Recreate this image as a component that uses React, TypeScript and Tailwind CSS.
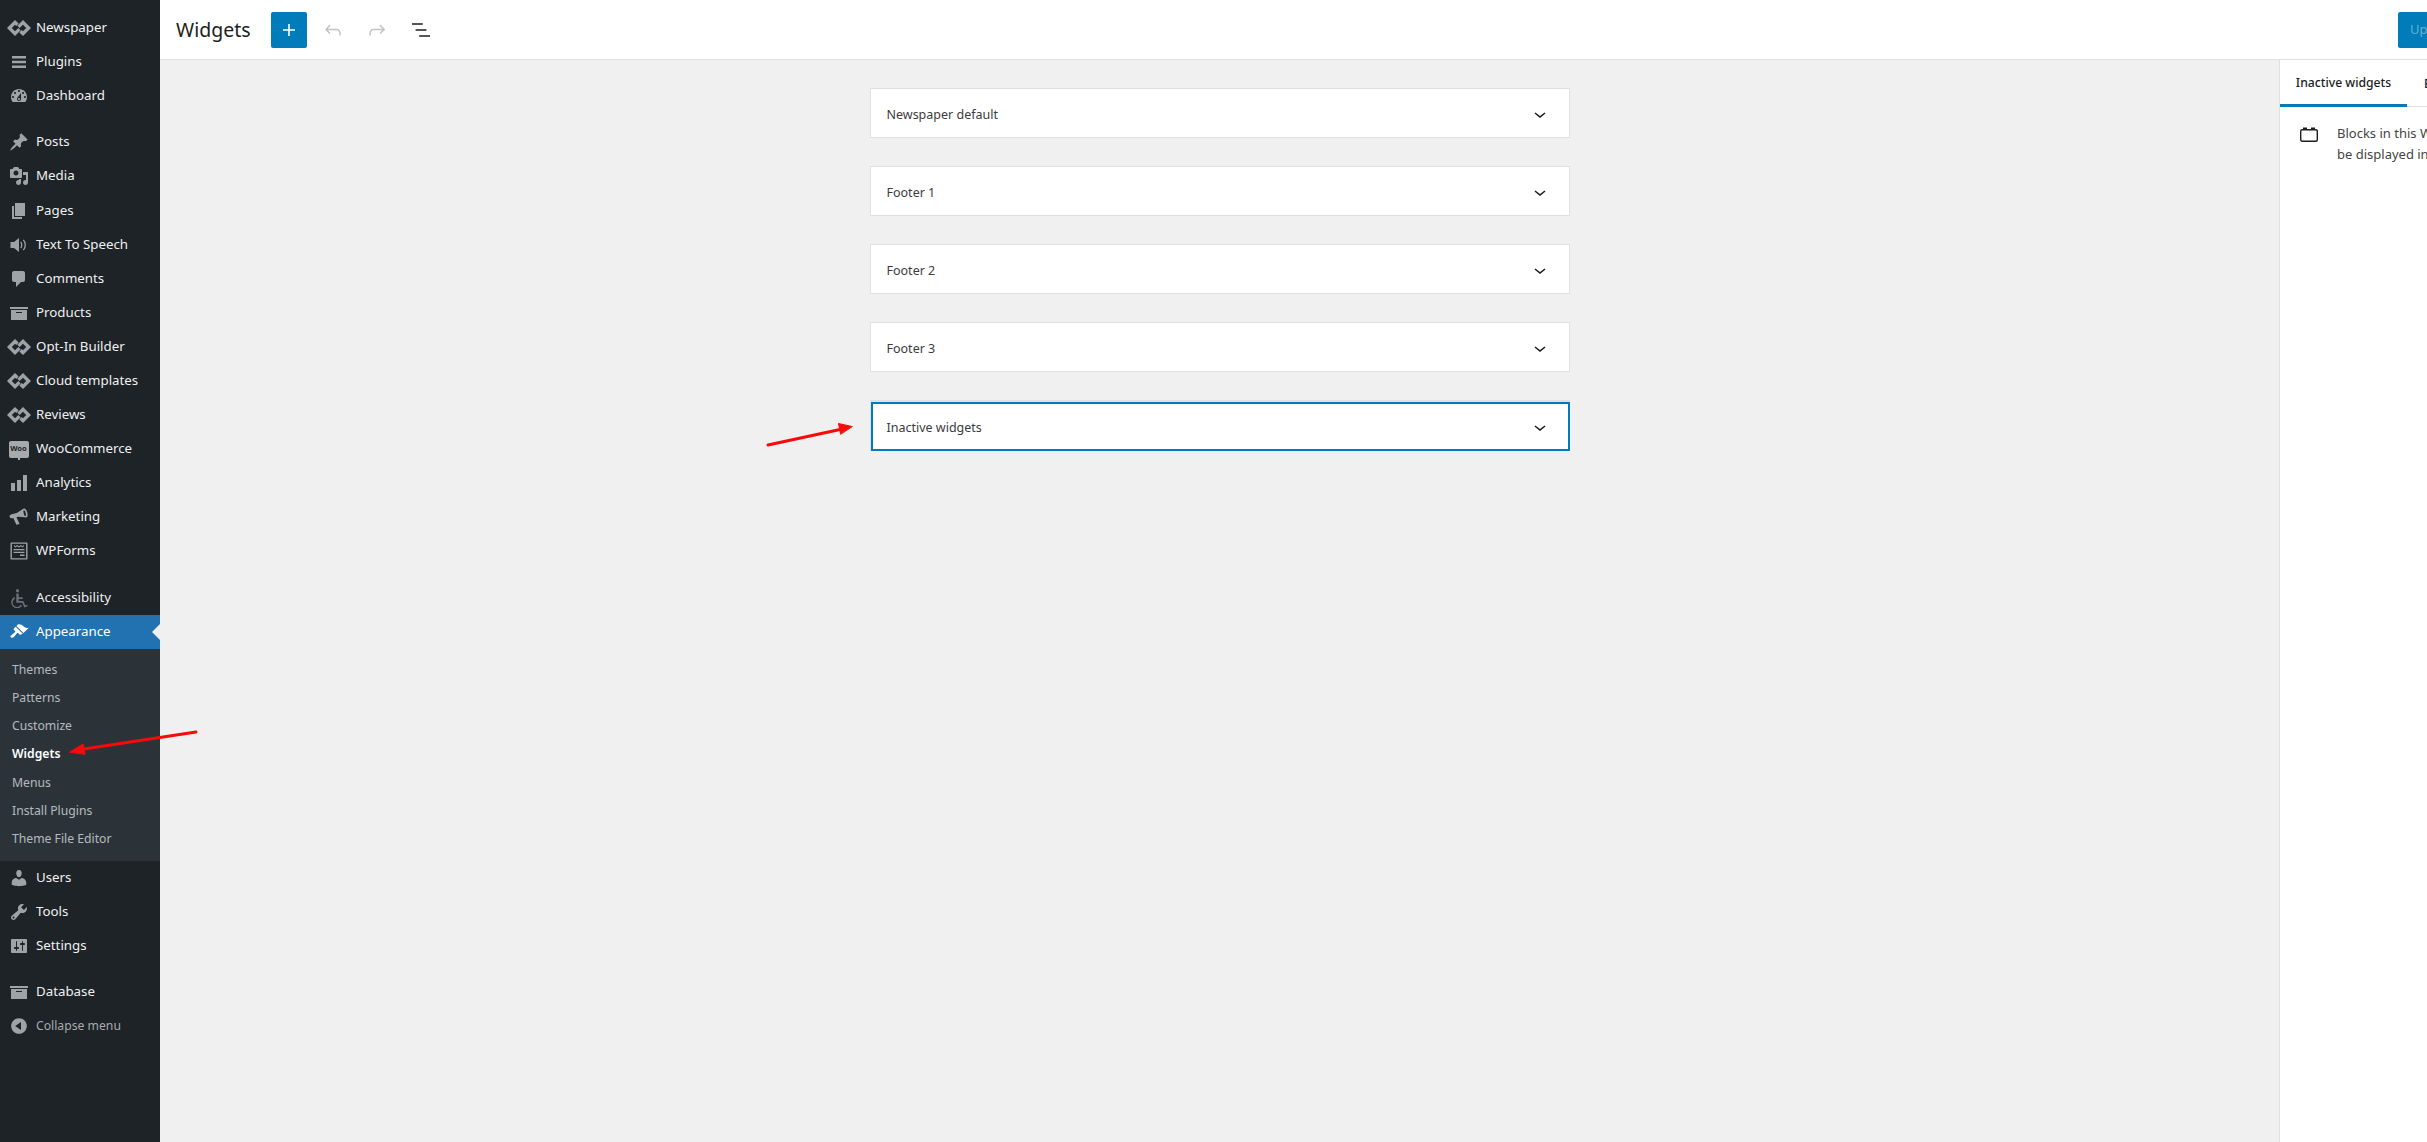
import React from "react";

const FONT = "font-['Noto_Sans','Open_Sans',sans-serif]";

// dashicon paths, 20x20 box
const DASH: Record<string, string> = {
  menu: "M3 4h14v2.400H3zM3 8.800h14v2.400H3zM3 13.600h14V16H3z",
  dashboard:
    "M3.760 16h12.480c1.100-1.370 1.760-3.110 1.760-5 0-4.420-3.580-8-8-8s-8 3.580-8 8c0 1.890.66 3.630 1.760 5zM10 4c.55 0 1 .45 1 1s-.45 1-1 1-1-.45-1-1 .45-1 1-1zM6 6c.55 0 1 .45 1 1s-.45 1-1 1-1-.45-1-1 .45-1 1-1zm8 0c.55 0 1 .45 1 1s-.45 1-1 1-1-.45-1-1 .45-1 1-1zm-5.370 5.550L12 7v6c0 1.100-.9 2-2 2s-2-.9-2-2c0-.57.24-1.080.63-1.450zM4 10c.55 0 1 .45 1 1s-.45 1-1 1-1-.45-1-1 .45-1 1-1zm12 0c.55 0 1 .45 1 1s-.45 1-1 1-1-.45-1-1 .45-1 1-1zm-5 3c0-.55-.45-1-1-1s-1 .45-1 1 .45 1 1 1 1-.45 1-1z",
  pin: "M10.440 3.020l1.820-1.820 6.360 6.350-1.830 1.820c-1.050-.68-2.480-.57-3.410.36l-.75.75c-.92.93-1.040 2.350-.35 3.410l-1.830 1.820-2.410-2.410-2.800 2.790c-.42.42-3.380 2.710-3.800 2.290s1.860-3.390 2.280-3.810l2.790-2.790L4.100 9.360l1.830-1.820c1.050.69 2.480.57 3.400-.36l.75-.75c.93-.92 1.050-2.350.36-3.410z",
  media:
    "M13 11V4c0-.55-.45-1-1-1h-1.670L9 1H5L3.670 3H2c-.55 0-1 .45-1 1v7c0 .55.45 1 1 1h10c.55 0 1-.45 1-1zM7 4.500c1.380 0 2.500 1.120 2.500 2.500S8.380 9.500 7 9.500 4.500 8.380 4.500 7 5.620 4.500 7 4.500zM14 6h5v10.500c0 1.380-1.120 2.500-2.500 2.500S14 17.880 14 16.500s1.120-2.500 2.500-2.500c.17 0 .34.02.5.05V9h-3V6zm-4 8.050V13h2v3.500c0 1.380-1.120 2.500-2.500 2.500S7 17.880 7 16.500 8.120 14 9.500 14c.17 0 .34.02.5.05z",
  page: "M6 15V2h10v13H6zm-1 1h8v2H3V5h2v11z",
  speaker:
    "M1.500 7H5l5-4v14l-5-4H1.500zM12 6.500c1.800 1 1.800 6 0 7l-.7-1c1-.8 1-4.200 0-5zM14.500 4.500c3.200 2 3.200 9 0 11l-.7-1c2.400-1.800 2.400-7.200 0-9z",
  comment:
    "M5 2h9c1.100 0 2 .9 2 2v7c0 1.100-.9 2-2 2h-2l-5 5v-5H5c-1.100 0-2-.9-2-2V4c0-1.100.9-2 2-2z",
  archive: "M19 4v2H1V4h18zM2 7h16v10H2V7zm11 3V9H7v1h6z",
  chart: "M18 18V2h-4v16h4zm-6 0V7H8v11h4zm-6 0v-8H2v8h4z",
  megaphone:
    "M18 3.500c.8 1 1.200 2.600 1.200 4.300s-.4 3.300-1.200 4.200c-.9.500-1.800.2-2.600-.4L9 9.500H7.500l1.300 7.300H5.500L4.200 9.500H3.500C2.100 9.500 1 8.700 1 7.500s1.100-2 2.500-2H9l6.400-2.200c.9-.4 1.800-.3 2.600.2zm-1.500 1.300c-.6 0-1 1.300-1 3s.4 3 1 3 1-1.300 1-3-.4-3-1-3z",
  wpforms:
    "M2.500 1.500h15c.6 0 1 .4 1 1v15c0 .6-.4 1-1 1h-15c-.6 0-1-.4-1-1v-15c0-.6.4-1 1-1zm.4 1.200v14.600h14.200V2.700zM4.500 8h11v1.300h-11zm0 2.800h11v1.300h-11zM11 13.600h4.500v1.400H11zM5 4l1.500 1.300L8 4l2 1.300L12 4l1.500 1.300L15 4v1.200l-1.500 1.300L12 5.300l-2 1.200-2-1.200-1.500 1.200L5 5.200z",
  access:
    "M8.500 1a1.700 1.700 0 1 1 0 3.400A1.700 1.700 0 0 1 8.500 1zM7.300 5.500h2.400v3.700h4v1.800h-4V13h4.600l2 4.500 1.700-.7.600 1.500-3.300 1.300-2-4.800H7.300zM5.700 8.800v2.100a4.300 4.300 0 1 0 6.200 5.300l1 1.800A6 6 0 1 1 5.700 8.800z",
  appearance:
    "M14.480 11.060L7.410 3.990l1.500-1.500c.5-.56 2.300-.47 3.510.32 1.210.8 1.430 1.280 2.910 2.100 1.180.64 2.450 1.260 4.450.85zm-.71.71L6.700 4.700 4.930 6.470c-.39.39-.39 1.020 0 1.410l1.060 1.060c.39.39.39 1.030 0 1.420-.6.6-1.430 1.110-2.210 1.690-.35.26-.7.53-1.010.84C1.430 13.230.99 14.300 2 15.310c1.010 1.010 2.080.57 3.400-.73.31-.31.58-.66.84-1.010.58-.78 1.090-1.610 1.690-2.210.39-.39 1.030-.39 1.420 0l1.060 1.060c.39.39 1.020.39 1.410 0z",
  users:
    "M10 9.250c-2.270 0-2.730-3.440-2.730-3.440C7 4.020 7.820 2 9.970 2c2.160 0 2.980 2.020 2.710 3.810 0 0-.41 3.440-2.680 3.440zm0 2.570L12.720 10c2.390 0 4.520 2.330 4.520 4.530v2.490s-3.650 1.130-7.240 1.130c-3.650 0-7.240-1.130-7.240-1.130v-2.490c0-2.250 1.940-4.480 4.470-4.480z",
  tools:
    "M16.680 9.770c-1.340 1.340-3.300 1.670-4.950.99l-5.410 6.520c-.99.99-2.590.99-3.580 0s-.99-2.590 0-3.570l6.520-5.420c-.68-1.650-.35-3.610.99-4.950 1.280-1.280 3.120-1.620 4.720-1.060l-2.890 2.890 2.820 2.820 2.860-2.870c.53 1.580.18 3.390-1.080 4.650zM3.810 16.210c.4.39 1.040.39 1.430 0 .4-.4.4-1.040 0-1.430-.39-.4-1.030-.4-1.430 0-.39.39-.39 1.030 0 1.430z",
  settings:
    "M18 16V4c0-.55-.45-1-1-1H3c-.55 0-1 .45-1 1v12c0 .55.45 1 1 1h14c.55 0 1-.45 1-1zM8 11h1c.55 0 1 .45 1 1s-.45 1-1 1H8v1.500c0 .28-.22.5-.5.5s-.5-.22-.5-.5V13H6c-.55 0-1-.45-1-1s.45-1 1-1h1V5.500c0-.28.22-.5.5-.5s.5.22.5.5V11zm5-2h-1c-.55 0-1-.45-1-1s.45-1 1-1h1V5.500c0-.28.22-.5.5-.5s.5.22.5.5V7h1c.55 0 1 .45 1 1s-.45 1-1 1h-1v5.500c0 .28-.22.5-.5.5s-.5-.22-.5-.5V9z",
  collapse:
    "M10 2.160c4.330 0 7.840 3.510 7.840 7.840s-3.510 7.840-7.840 7.840S2.160 14.330 2.160 10 5.710 2.160 10 2.160zm2 11.720V6.120L6.180 9.970z",
};

function Dash({ name, className }: { name: string; className?: string }) {
  return (
    <svg viewBox="0 0 20 20" className={`h-5 w-5 fill-current ${className ?? ""}`}>
      <path fillRule="evenodd" d={DASH[name]} />
    </svg>
  );
}

function TagDivLogo() {
  return (
    <svg viewBox="0 0 24 16" className="h-4 w-6" fill="none" stroke="currentColor" strokeWidth="3.400">
      <path d="M10.500 4.800 8 2.400 2.400 8 8 13.600l4.500-4.500" />
      <path d="M13.500 11.200 16 13.600 21.600 8 16 2.400l-4.500 4.500" />
    </svg>
  );
}

function WooBadge() {
  return (
    <div className="relative flex h-[17px] w-5 items-center justify-center rounded-[2px] bg-[#a7aaad]">
      <span className="text-[7.500px] font-bold leading-none text-[#1d2327]">Woo</span>
      <span className="absolute -bottom-[2px] left-[9px] h-[2px] w-[2px] bg-[#a7aaad]" />
    </div>
  );
}

type Item = { label: string; icon: string; gapBefore?: boolean };

const TOP_ITEMS: Item[] = [
  { label: "Newspaper", icon: "logo" },
  { label: "Plugins", icon: "menu" },
  { label: "Dashboard", icon: "dashboard" },
  { label: "Posts", icon: "pin", gapBefore: true },
  { label: "Media", icon: "media" },
  { label: "Pages", icon: "page" },
  { label: "Text To Speech", icon: "speaker" },
  { label: "Comments", icon: "comment" },
  { label: "Products", icon: "archive" },
  { label: "Opt-In Builder", icon: "logo" },
  { label: "Cloud templates", icon: "logo" },
  { label: "Reviews", icon: "logo" },
  { label: "WooCommerce", icon: "woo" },
  { label: "Analytics", icon: "chart" },
  { label: "Marketing", icon: "megaphone" },
  { label: "WPForms", icon: "wpforms" },
  { label: "Accessibility", icon: "access", gapBefore: true },
];

const SUB_ITEMS = ["Themes", "Patterns", "Customize", "Widgets", "Menus", "Install Plugins", "Theme File Editor"];

const BOTTOM_ITEMS: Item[] = [
  { label: "Users", icon: "users" },
  { label: "Tools", icon: "tools" },
  { label: "Settings", icon: "settings" },
  { label: "Database", icon: "archive", gapBefore: true },
];

const AREAS = ["Newspaper default", "Footer 1", "Footer 2", "Footer 3", "Inactive widgets"];

function MenuRow({ item }: { item: Item }) {
  return (
    <div
      className={`flex h-[34.100px] items-center text-[13.300px] text-[#f0f0f1] ${item.gapBefore ? "mt-3" : ""}`}
    >
      <div className="flex w-9 shrink-0 justify-center pl-[1px] text-[#9ea3a8]">
        {item.icon === "logo" ? (
          <TagDivLogo />
        ) : item.icon === "woo" ? (
          <WooBadge />
        ) : (
          <Dash
            name={item.icon}
            className={
              item.icon === "access" ? "text-[#6a6f74]" : item.icon === "megaphone" ? "-rotate-[15deg]" : ""
            }
          />
        )}
      </div>
      <span className="whitespace-nowrap">{item.label}</span>
    </div>
  );
}

function Sidebar() {
  return (
    <aside className="w-40 shrink-0 bg-[#1d2327] pt-[11px]">
      {TOP_ITEMS.map((item) => (
        <MenuRow key={item.label} item={item} />
      ))}

      {/* Appearance, open */}
      <div className="relative flex h-[34px] items-center bg-[#2271b1] text-[13.300px] text-white">
        <div className="flex w-9 shrink-0 justify-center pl-[1px]">
          <Dash name="appearance" />
        </div>
        <span>Appearance</span>
        <span className="absolute right-0 top-[9px] h-0 w-0 border-y-8 border-r-8 border-y-transparent border-r-[#f0f0f0]" />
      </div>
      <div className="bg-[#2c3338] py-[7px]">
        {SUB_ITEMS.map((label) => (
          <div
            key={label}
            className={`flex h-[28.300px] items-center pl-3 text-[12.200px] ${
              label === "Widgets" ? "font-semibold text-white" : "text-[#f0f6fcb3]"
            }`}
          >
            {label}
          </div>
        ))}
      </div>

      {BOTTOM_ITEMS.map((item) => (
        <MenuRow key={item.label} item={item} />
      ))}
      <div className="flex h-[34px] items-center text-[12.200px] text-[#a7aaad]">
        <div className="flex w-9 shrink-0 justify-center pl-[1px] text-[#9ea3a8]">
          <Dash name="collapse" />
        </div>
        <span>Collapse menu</span>
      </div>
    </aside>
  );
}

function ToolbarIcon({ d, className }: { d: string; className: string }) {
  return (
    <svg viewBox="0 0 24 24" className={`h-6 w-6 fill-current ${className}`}>
      <path d={d} />
    </svg>
  );
}

function Header() {
  return (
    <header className="flex h-[60px] shrink-0 items-center border-b border-[#e0e0e0] bg-white pl-4">
      <h1 className="w-[95px] shrink-0 text-[19.500px] font-normal text-[#1e1e1e]">Widgets</h1>
      <button className="flex h-9 w-9 shrink-0 items-center justify-center rounded-[2px] bg-[#007cba] text-white">
        <ToolbarIcon d="M18 11.200h-5.200V6h-1.600v5.200H6v1.600h5.200V18h1.600v-5.200H18z" className="" />
      </button>
      <div className="ml-[14px] flex items-center gap-5">
        <ToolbarIcon
          d="M18.300 11.700c-.6-.6-1.400-.9-2.300-.9H6.700l2.900-3.300-1.100-1-4.500 5L8.500 16l1-1-2.700-2.700H16c.5 0 .9.2 1.300.5 1 1 1 3.400 1 4.500v.3h1.500v-.2c0-1.500 0-4.300-1.500-5.700z"
          className="text-[#c4c4c4]"
        />
        <ToolbarIcon
          d="M15.600 6.500l-1.100 1 2.900 3.300H8c-.9 0-1.700.3-2.300.9-1.400 1.500-1.400 4.200-1.400 5.600v.2h1.500v-.3c0-1.100 0-3.500 1-4.500.3-.3.7-.5 1.300-.5h9.200L14.500 15l1.100 1.100 4.600-4.600-4.600-5z"
          className="text-[#c4c4c4]"
        />
        <ToolbarIcon
          d="M13.800 5.200H3v1.500h10.800V5.200zm-3.600 12v1.500H21v-1.500H10.200zm7.200-6H6.600v1.500h10.800v-1.500z"
          className="text-[#1e1e1e]"
        />
      </div>
      <button className="-mr-[40px] ml-auto h-9 w-[69px] shrink-0 rounded-[2px] bg-[#007cba] text-[13px] text-white/40">
        Update
      </button>
    </header>
  );
}

function WidgetArea({ title, focused }: { title: string; focused: boolean }) {
  return (
    <div
      className={`flex w-[700px] items-center justify-between bg-white text-[12.500px] text-[#3c3c3c] ${
        focused
          ? "mb-[-1px] h-[51px] border-l border-t-2 border-[#e0e0e0] pl-[16px] pr-[18px] shadow-[inset_2px_0_0_#007cba,inset_0_2px_0_#007cba,inset_-2px_0_0_#007cba,inset_0_-2px_0_#007cba]"
          : "h-[50px] border border-[#e0e0e0] pl-[16px] pr-[17px]"
      }`}
    >
      <span className={focused ? "pt-[3px]" : "pt-[5px]"}>{title}</span>
      <span className={focused ? "" : "pt-[1.500px]"}>
        <ToolbarIcon d="M17.500 11.600L12 16l-5.500-4.400.9-1.200L12 14l4.500-3.600 1 1.200z" className="text-[#1e1e1e]" />
      </span>
    </div>
  );
}

function SettingsPanel() {
  return (
    <aside className="w-[280px] shrink-0 border-l border-[#e0e0e0] bg-white">
      <div className="flex h-[47px] border-b border-[#e0e0e0] text-[12.200px]">
        <div className="-mb-px flex w-[127px] items-center justify-center border-b-[3px] border-[#007cba] pt-[2px] font-medium text-[#1e1e1e]">
          Inactive widgets
        </div>
        <div className="flex items-center pl-[17px] pt-[2px] font-medium text-[#1e1e1e]">Block</div>
      </div>
      <div className="flex pl-5 pt-[16px] text-[13px] leading-[21px] text-[#444]">
        <svg viewBox="0 0 18 15" className="mt-[4px] h-[15px] w-[18px] shrink-0" fill="none">
          <rect x="0.700" y="2.700" width="16.600" height="11.600" rx="1.500" stroke="#1e1e1e" strokeWidth="1.400" />
          <rect x="3" y="0.500" width="4" height="2.500" fill="#1e1e1e" />
          <rect x="11" y="0.500" width="4" height="2.500" fill="#1e1e1e" />
        </svg>
        <p className="ml-[19px] w-[216px] shrink-0">
          Blocks in this Widget Area will not be displayed in your site.
        </p>
      </div>
    </aside>
  );
}

function Annotations() {
  return (
    <svg className="pointer-events-none absolute inset-0 h-full w-full" viewBox="0 0 2427 1142">
      <g fill="#f60a0a" stroke="#f60a0a" strokeLinecap="round">
        <line x1="768" y1="445" x2="840" y2="429.500" strokeWidth="3" />
        <polygon points="852,426.500 838.500,423.500 840.500,434" strokeWidth="1" />
        <line x1="196" y1="732" x2="84" y2="749" strokeWidth="3" />
        <polygon points="70,752 83,744 85,754" strokeWidth="1" />
      </g>
    </svg>
  );
}

export default function App() {
  return (
    <div className={`relative flex h-[1142px] w-[2427px] overflow-hidden bg-[#f0f0f0] ${FONT}`}>
      <Sidebar />
      <main className="flex min-w-0 flex-1 flex-col">
        <Header />
        <div className="flex min-h-0 flex-1">
          <div className="flex w-[2119px] shrink-0 flex-col items-center gap-7 pt-7">
            {AREAS.map((title) => (
              <WidgetArea key={title} title={title} focused={title === "Inactive widgets"} />
            ))}
          </div>
          <SettingsPanel />
        </div>
      </main>
      <Annotations />
    </div>
  );
}
